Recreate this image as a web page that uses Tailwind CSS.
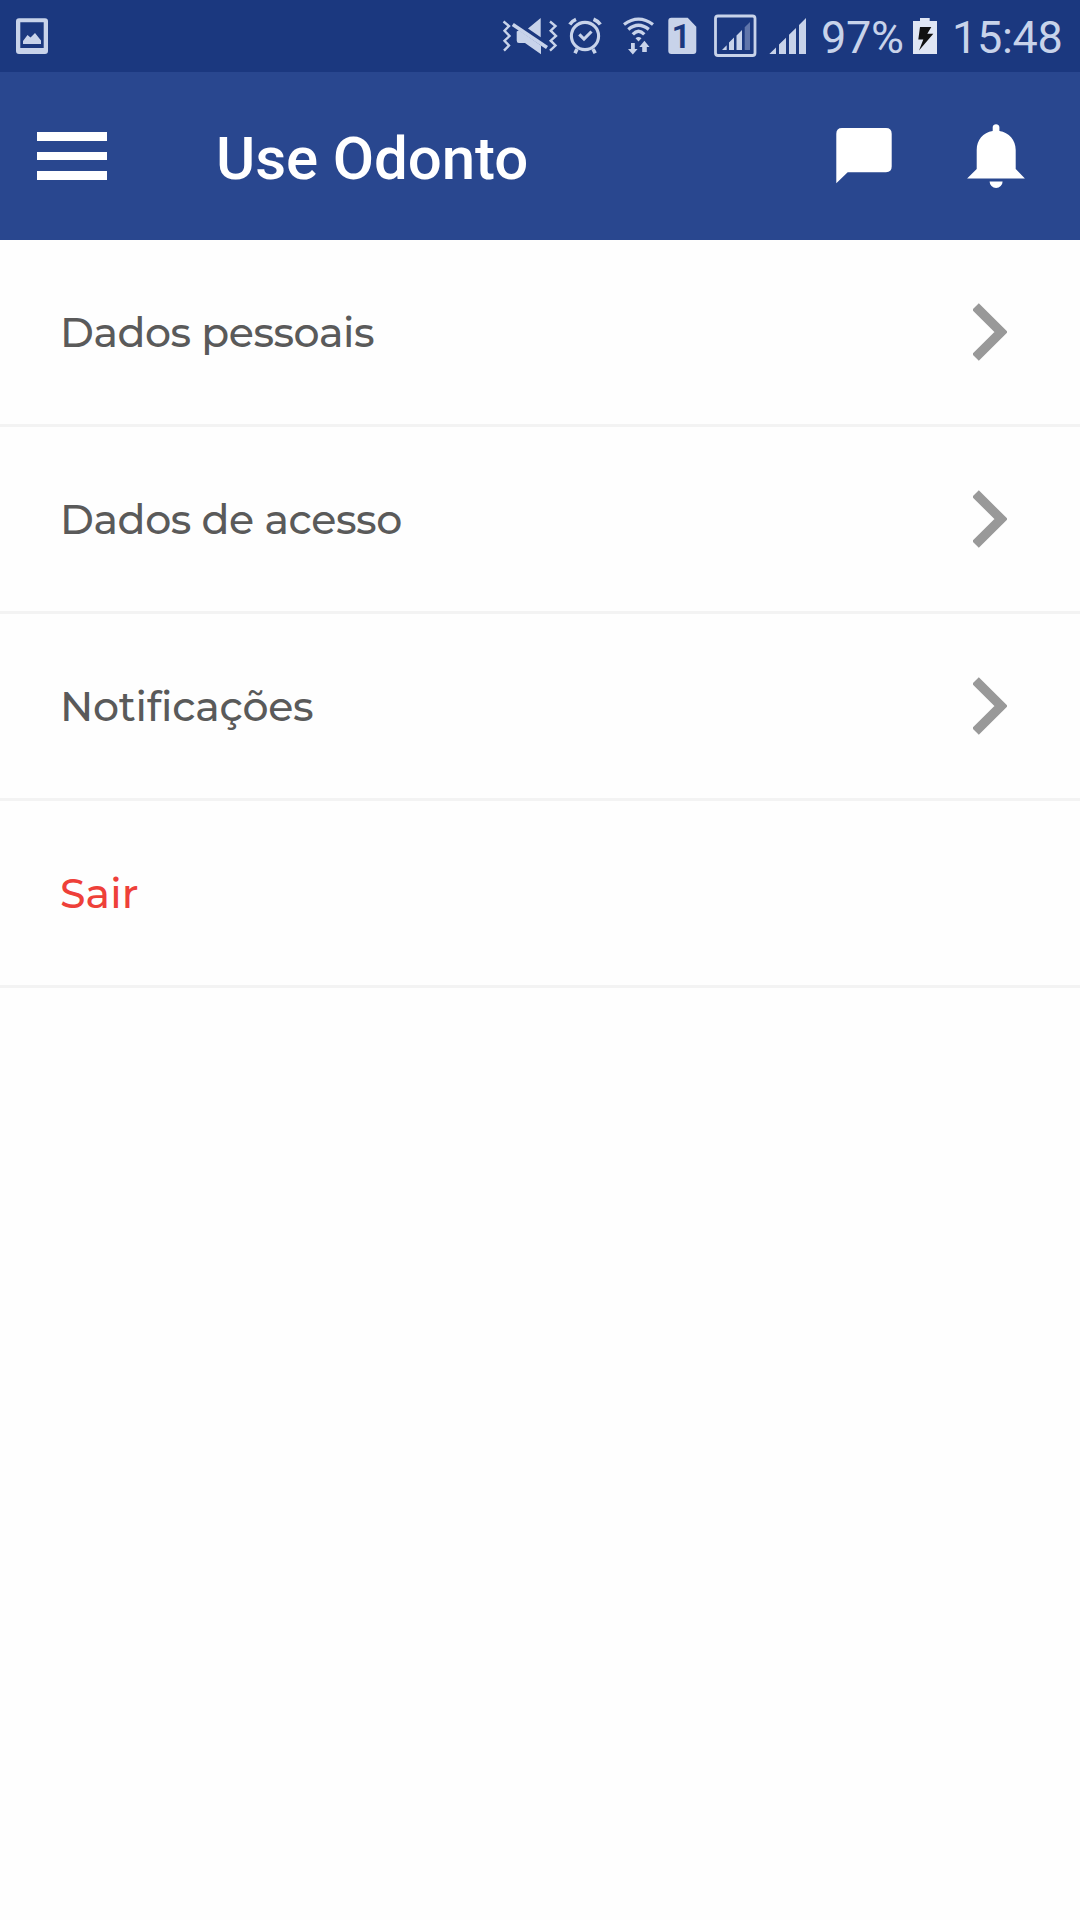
<!DOCTYPE html>
<html lang="pt-BR">
<head>
<meta charset="utf-8">
<title>Use Odonto</title>
<script src="https://cdn.jsdelivr.net/npm/@tailwindcss/browser@4"></script>
</head>
<body class="w-[1080px] h-[1920px] overflow-hidden bg-[#fefefe] flex flex-col">
<!-- Status bar -->
<div class="h-[72px] shrink-0 bg-[#1b387f] text-[#c8d3ea] flex items-center font-[Roboto,sans-serif]">
  <svg class="w-16 h-[72px] shrink-0" viewBox="0 0 64 72" fill="currentColor"><path fill-rule="evenodd" d="M19 18.3H45Q48 18.3 48 21.3V51Q48 54 45 54H19Q16 54 16 51V21.3Q16 18.3 19 18.3ZM20.3 22.3V48H43.7V22.3Z"/><path d="M23 44V41L27.5 35L30.5 37.5L35 33L41 40.5V44Z"/></svg>
  <svg class="w-[66px] h-[72px] shrink-0 ml-auto" viewBox="496 0 66 72" fill="currentColor"><g fill="none" stroke="currentColor" stroke-width="2.4"><path d="M503.5 21.5L509 26L504.5 30.7L509.5 36L504.5 40.7L509 45.5L504 50.7M550 21.5L555.5 26L550.7 30.7L556 36L550.7 40.7L555.5 45.5L550 50.7"/><path stroke-width="3.6" d="M512.8 24.5L547 47.5"/></g><path d="M540.7 18V37.3L528 28.5ZM516.7 31.5L519 30.2L541 45.5V54.3L525 43H519Q516.7 43 516.7 40.5Z"/></svg>
  <svg class="w-[50px] h-[72px] shrink-0" viewBox="562 0 50 72" fill="none" stroke="currentColor" stroke-width="3.1"><circle cx="585" cy="36" r="13.6"/><path d="M579.3 34.3L584 39L591.5 31.5"/><path d="M569.8 24.5Q572 21 576 19.3M593.5 19.3Q598 21 600.3 24.5M577 49L575 53.3M593 49L595.2 53.3" stroke-width="3.6"/></svg>
  <svg class="w-[50px] h-[72px] shrink-0" viewBox="612 0 50 72" fill="currentColor"><path fill="none" stroke="currentColor" stroke-width="3.3" d="M624 24.5Q638.5 13.8 653 24.5M628.3 29.4Q638.5 21 648.8 29.4M632.8 34.3Q638.5 28.2 644.3 34.3"/><path d="M635.5 38.3Q638.5 35.5 641.5 38.3L638.5 41.6ZM631 43H634.8V49H637.6L632.8 54.4L628 49H631ZM642.2 52V47H639.3L644.4 40.7L649.5 47H646.8V52Z"/></svg>
  <svg class="w-[43px] h-[72px] shrink-0" viewBox="662 0 43 72" fill="currentColor"><path d="M671.3 17.7H687.7L696.3 26.7V51Q696.3 54 693.3 54H671.3Q668.3 54 668.3 51V20.7Q668.3 17.7 671.3 17.7Z"/><text x="681.3" y="48" font-size="34" font-weight="600" text-anchor="middle" fill="#1b387f">1</text></svg>
  <svg class="w-[57px] h-[72px] shrink-0" viewBox="705 0 57 72" fill="currentColor"><rect x="715.5" y="16" width="39.5" height="39.5" rx="2.5" fill="none" stroke="currentColor" stroke-width="2.8"/><path d="M722 50L726.7 45.3V50ZM729 50V42.5L734 37.5V50ZM736.5 50V35.5L742 30V50Z"/><path opacity=".4" d="M744.7 50V27.3L750 22V50Z"/></svg>
  <svg class="w-[50px] h-[72px] shrink-0" viewBox="762 0 50 72" fill="currentColor"><path d="M769.3 54L776 47.5V54ZM779 54V44.5L786 37.7V54ZM789 54V34.7L796 27.9V54ZM799 54V25L806 18V54Z"/></svg>
  <span class="w-[94px] pl-[9px] text-[45px] leading-[72px] pt-[4px] tracking-[-0.3px] whitespace-nowrap">97%</span>
  <svg class="w-[44px] h-[72px] shrink-0" viewBox="906 0 44 72"><path fill="#e0e6f4" d="M920 18H929.7V21H937V54H913V21H920Z"/><path fill="#111" d="M920 27H931.3L927.3 33.7H933.3L919 50.5L923.3 39.5H918.3Z"/></svg>
  <span class="w-[130px] pl-[2px] text-[45px] leading-[72px] pt-[4px] tracking-[-0.3px] whitespace-nowrap">15:48</span>
</div>
<!-- App bar -->
<header class="h-[168px] shrink-0 bg-[#29478f] text-white flex items-start">
  <div class="flex flex-col gap-[11px] ml-[37px] mt-[60px] w-[70px]"><i class="h-[8.5px] bg-white"></i><i class="h-[8.5px] bg-white"></i><i class="h-[8.5px] bg-white"></i></div>
  <h1 class="ml-[109px] mt-[51px] text-[60px] leading-[72px] tracking-[-0.1px] font-medium font-[Roboto,sans-serif] whitespace-nowrap">Use Odonto</h1>
  <svg class="w-[72px] h-[168px] shrink-0 ml-auto" viewBox="828 72 72 168" fill="currentColor"><path d="M842 128H886Q891.7 128 891.7 133.7V166.6Q891.7 172.3 886 172.3H847.7L836.3 183.3V133.7Q836.3 128 842 128Z"/></svg>
  <svg class="w-[72px] h-[168px] shrink-0 ml-[60px] mr-[48px]" viewBox="960 72 72 168" fill="currentColor"><path d="M992.7 131V127A3.4 3.4 0 0 1 999.4 127V131C1009 132.5 1015.7 140 1015.7 150V169L1024.9 178.5H967.1L976.7 169V150C976.7 140 983 132.5 992.7 131ZM989.6 181.5H1002.6A6.5 6.5 0 0 1 989.6 181.5Z"/></svg>
</header>
<!-- Settings list -->
<main class="flex flex-col text-[#5a5a5a] text-[41px] font-medium font-[Montserrat,Inter,sans-serif]">
  <a class="h-[187px] border-b-3 border-[#f3f3f3] flex items-center justify-between pl-[60px] pr-[73px]"><span class="pt-[2px] tracking-[-0.45px]">Dados pessoais</span><svg class="w-[34px] h-[58px]" viewBox="0 0 34 58"><path fill="none" stroke="#999" stroke-width="9.4" d="M2.5 3.5L28 29L2.5 54.5"/></svg></a>
  <a class="h-[187px] border-b-3 border-[#f3f3f3] flex items-center justify-between pl-[60px] pr-[73px]"><span class="pt-[2px] tracking-[-0.4px]">Dados de acesso</span><svg class="w-[34px] h-[58px]" viewBox="0 0 34 58"><path fill="none" stroke="#999" stroke-width="9.4" d="M2.5 3.5L28 29L2.5 54.5"/></svg></a>
  <a class="h-[187px] border-b-3 border-[#f3f3f3] flex items-center justify-between pl-[60px] pr-[73px]"><span class="pt-[2px] tracking-[-0.25px]">Notificações</span><svg class="w-[34px] h-[58px]" viewBox="0 0 34 58"><path fill="none" stroke="#999" stroke-width="9.4" d="M2.5 3.5L28 29L2.5 54.5"/></svg></a>
  <a class="h-[187px] border-b-3 border-[#f3f3f3] flex items-center pl-[60px] text-[#ee4039]"><span class="pt-[2px] tracking-[0.1px]">Sair</span></a>
</main>
</body>
</html>
